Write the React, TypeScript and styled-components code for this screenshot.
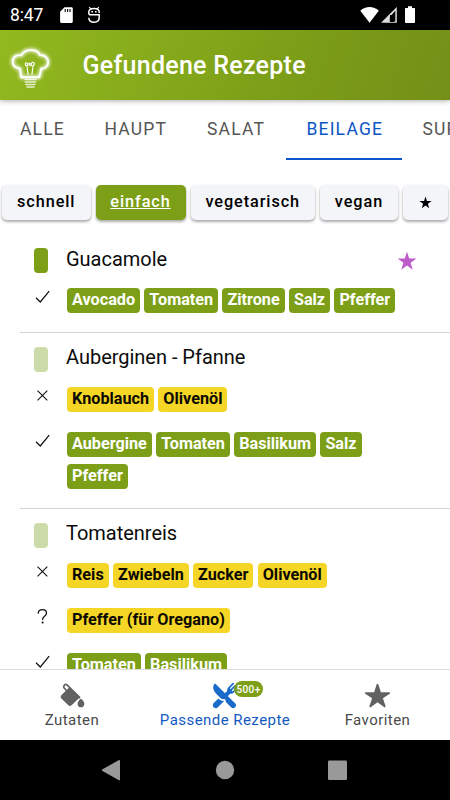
import React from 'react';
import styled, { createGlobalStyle } from 'styled-components';
import { IoColorFill, IoRestaurant, IoStar } from 'react-icons/io5';

const GlobalStyle = createGlobalStyle`
  *, *::before, *::after { box-sizing: border-box; }
  body { margin: 0; background: #fff; font-family: Roboto, "Liberation Sans", sans-serif; }
`;

const Screen = styled.div`
  display: flex;
  flex-direction: column;
  width: 450px;
  height: 800px;
  overflow: hidden;
  background: #fff;
  color: #0b0b0b;
`;

const StatusBar = styled.div`
  flex: none;
  display: flex;
  align-items: center;
  justify-content: space-between;
  height: 30px;
  padding: 0 34px 0 10px;
  background: #000;
  color: #fff;
`;

const Clock = styled.span`
  width: 50px;
  font-size: 17.5px;
  line-height: 30px;
  padding-bottom: 1px;
  letter-spacing: -0.1px;
`;

const StatusGroup = styled.div`
  display: flex;
  align-items: center;
  gap: 15px;
  height: 30px;
  svg { display: block; }
  ${Clock} { margin-right: -15px; }
`;

const Header = styled.header`
  flex: none;
  position: relative;
  display: flex;
  align-items: center;
  height: 70px;
  padding-left: 4px;
  background: linear-gradient(110deg, #92b91f 0%, #7d9f18 60%, #749018 100%);
  box-shadow: 0 1px 5px rgba(0, 0, 0, 0.32);
`;

const Title = styled.h1`
  margin: 0 0 0 22.5px;
  padding-top: 2px;
  color: #fff;
  font-size: 25px;
  line-height: 30px;
  font-weight: 500;
  letter-spacing: 0.27px;
`;

const Tabs = styled.nav`
  flex: none;
  display: flex;
  height: 60px;
  overflow: hidden;
`;

const Tab = styled.div<{ $width: number; $active?: boolean }>`
  flex: none;
  width: ${p => p.$width}px;
  height: 60px;
  padding-left: 20px;
  border-bottom: 2.5px solid ${p => (p.$active ? '#0b55cc' : 'transparent')};
  color: ${p => (p.$active ? '#0b55c4' : '#555')};
  font-size: 17.5px;
  line-height: 59px;
  letter-spacing: 1.2px;
  white-space: nowrap;
`;

const Filters = styled.div`
  flex: none;
  display: flex;
  gap: 5px;
  padding: 25px 2px 14.5px;
`;

const Filter = styled.button<{ $width: number; $active?: boolean }>`
  flex: none;
  width: ${p => p.$width}px;
  height: 34.5px;
  padding: 0 0 1px;
  border: 0;
  border-radius: 5px;
  background: ${p => (p.$active ? '#7d9f18' : '#f4f5f8')};
  box-shadow: 0 2px 3px rgba(0, 0, 0, 0.28), 0 1px 3px rgba(0, 0, 0, 0.1);
  color: ${p => (p.$active ? '#fff' : '#000')};
  font-family: inherit;
  font-size: 16.25px;
  font-weight: 500;
  letter-spacing: 0.92px;
  text-decoration: ${p => (p.$active ? 'underline' : 'none')};
  white-space: nowrap;
  svg { display: block; margin: 2px auto 0; }
`;

const List = styled.main`
  flex: 1;
  min-height: 0;
  overflow: hidden;
`;

const Recipe = styled.article`
  margin-left: 20px;
  padding: 14px 33px 18.5px 14px;
  border-bottom: 1.25px solid #d4d4d4;
`;

const RecipeHead = styled.div`
  display: flex;
  align-items: center;
  height: 25px;
  margin-bottom: 15px;
`;

const Swatch = styled.span<{ $faded?: boolean }>`
  width: 14px;
  height: 25px;
  border-radius: 4px;
  background: ${p => (p.$faded ? '#cddaa9' : '#7d9f18')};
`;

const RecipeName = styled.h2`
  flex: 1;
  margin: 0 0 0 18px;
  font-size: 20px;
  font-weight: 400;
  line-height: 22px;
  padding-bottom: 4px;
  letter-spacing: -0.02px;
`;

const StarSlot = styled.span`
  display: flex;
  height: 20px;
`;

const Group = styled.div`
  display: grid;
  grid-template-columns: 33px 1fr;
  & + & { margin-top: 20px; }
`;

const Mark = styled.span`
  svg { display: block; }
`;

const Chips = styled.div`
  display: flex;
  flex-wrap: wrap;
  gap: 7.5px 4.3px;
`;

const Chip = styled.span<{ $missing?: boolean }>`
  height: 25px;
  padding: 0 5px;
  border-radius: 4px;
  background: ${p => (p.$missing ? '#f5d626' : '#7d9f18')};
  color: ${p => (p.$missing ? '#0b0900' : '#fff')};
  font-size: 16.2px;
  font-weight: 700;
  line-height: 23.5px;
  white-space: nowrap;
`;

const BottomTabs = styled.nav`
  flex: none;
  display: grid;
  grid-template-columns: 144px 162px 143px;
  height: 71px;
  border-top: 1px solid #dedede;
  background: #fff;
`;

const BottomTab = styled.div<{ $active?: boolean }>`
  display: flex;
  flex-direction: column;
  align-items: center;
  padding-top: 12px;
  color: ${p => (p.$active ? '#1a6ac9' : '#616161')};
`;

const IconWrap = styled.span`
  position: relative;
  height: 27px;
  svg { display: block; }
`;

const Label = styled.span<{ $active?: boolean }>`
  color: ${p => (p.$active ? '#1459c2' : '#4a4a4a')};
  font-size: 15px;
  line-height: 22px;
  letter-spacing: 0.45px;
  white-space: nowrap;
`;

const Count = styled.span`
  position: absolute;
  left: 22.5px;
  top: -1px;
  width: 29px;
  height: 16px;
  border-radius: 8px;
  background: #7d9f18;
  color: #fff;
  font-size: 10px;
  font-weight: 500;
  line-height: 17px;
  letter-spacing: 0.4px;
  text-align: center;
`;

const SystemNav = styled.div`
  flex: none;
  height: 60px;
  background: #000;
  svg { display: block; }
`;

const SdCard = () => (
  <svg width="13" height="30" viewBox="0 0 13 30">
    <path d="M4.5 7.3h6.9c.9 0 1.4.6 1.4 1.4v12.7c0 .9-.6 1.5-1.4 1.5H1.5c-.8 0-1.4-.6-1.4-1.5V11.8z" fill="#fff" />
    <path d="M5.2 9v3M7.6 9v3M10 9v3" stroke="#000" strokeWidth="1.1" />
  </svg>
);

const DroidFace = () => (
  <svg width="14" height="30" viewBox="1 0 14 30" fill="none" stroke="#fff" strokeWidth="1.5">
    <path d="M2.200 7.200l1.600 1.600M11.800 7.200l-1.600 1.600" strokeWidth="1.200" />
    <path d="M12.200 13V12c0-2.400-2-3.600-5.200-3.600S1.800 9.600 1.800 12v1c0 1.200.6 1.800 1.800 1.800H12.200V17.500c0 3.200-2 4.700-5.200 4.700S1.800 20.700 1.800 17.700" />
    <path d="M4.400 11.700h1.600M8 11.700h1.600" />
  </svg>
);

const Signals = () => (
  <svg width="56" height="30" viewBox="0 0 56 30">
    <path d="M.3 10.700C5.500 5.700 13.600 5.700 18.800 10.700L9.600 22.700z" fill="#fff" />
    <path d="M21 22.800L36.800 7v15.800z" fill="#ddd" />
    <path d="M29.800 17v4.500h5.500V10.800z" fill="#000" />
    <path d="M30 15h4v7h-4z" fill="#000" />
    <path d="M48 6.300h4v1.600h2c.6 0 1 .4 1 1v13c0 .6-.4 1-1 1h-8c-.6 0-1-.4-1-1v-13c0-.6.4-1 1-1h2z" fill="#fff" />
  </svg>
);

const hatOutline =
  'M21.800 77.300L20.500 68.600C15.500 67.800 13 64.800 13.200 61.200C13.500 56.500 17.500 54.600 22 55.300C23.500 51.800 27.500 50.100 31.500 50.100C35.600 50.100 39 51.800 40.500 55C45.200 54.800 48.600 58 48.700 62C48.800 66 45.500 68.600 41.800 68.800L39.800 77.300Z';

const ChefBulb = () => (
  <svg width="56" height="60" viewBox="4.500 35 56 60" fill="none" stroke="#fff" strokeLinecap="round" strokeLinejoin="round">
    <defs>
      <filter id="glow" x="-40%" y="-40%" width="180%" height="180%">
        <feGaussianBlur stdDeviation="1.700" />
      </filter>
    </defs>
    <path d={hatOutline} strokeWidth="4.500" opacity=".7" filter="url(#glow)" />
    <path d={hatOutline} strokeWidth="1.900" />
    <path d="M28.500 74.500L27.500 66M32.500 74.500L33.500 66M27.500 66q-2-.4-1.700-2.200t1.900-.7t-.2 2.900M33.500 66q-1.600 0-1.800-1.500t-1.600-1.300t0 2q1.500.6 2-1.600t2.200-.9t-.8 3.300" strokeWidth="1.100" />
    <path d="M25.500 79.600h11M25.700 82h10.500M26.300 84.600h9.200M27.500 87h7" strokeWidth="1.500" opacity=".8" />
  </svg>
);

const CheckIcon = () => (
  <svg width="16" height="25" viewBox="0 0 16 25" fill="none" stroke="#111" strokeWidth="1.250">
    <path d="M2 9.700L6.300 14L15.200 3.200" />
  </svg>
);

const CrossIcon = () => (
  <svg width="16" height="25" viewBox="0 0 16 25" fill="none" stroke="#111" strokeWidth="1.100">
    <path d="M3.500 3.600L13.300 13.400M13.300 3.600L3.500 13.400" />
  </svg>
);

const QuestionIcon = () => (
  <svg width="16" height="25" viewBox="0 0 16 25">
    <path d="M4.200 5.600C4.300 3.100 6 1.700 8.300 1.700c2.400 0 4.200 1.300 4.200 3.500 0 3-3.900 3.200-3.900 6v.7" fill="none" stroke="#111" strokeWidth="1.300" />
    <circle cx="8.600" cy="14.600" r="1" />
  </svg>
);

const StarShape = ({ size, color }: { size: number; color: string }) => (
  <svg width={size} height={size} viewBox="0 0 20 20">
    <path d="M10 .8L12.200 7.500H19.400L13.600 11.800L15.800 18.800L10 14.500L4.200 18.800L6.400 11.800L.6 7.500H7.800Z" fill={color} />
  </svg>
);

const marks = { have: <CheckIcon />, missing: <CrossIcon />, swap: <QuestionIcon /> };

type GroupData = { kind: keyof typeof marks; items: string[] };
type RecipeData = { name: string; faded?: boolean; favorite?: boolean; groups: GroupData[] };

const recipes: RecipeData[] = [
  {
    name: 'Guacamole',
    favorite: true,
    groups: [{ kind: 'have', items: ['Avocado', 'Tomaten', 'Zitrone', 'Salz', 'Pfeffer'] }],
  },
  {
    name: 'Auberginen - Pfanne',
    faded: true,
    groups: [
      { kind: 'missing', items: ['Knoblauch', 'Olivenöl'] },
      { kind: 'have', items: ['Aubergine', 'Tomaten', 'Basilikum', 'Salz', 'Pfeffer'] },
    ],
  },
  {
    name: 'Tomatenreis',
    faded: true,
    groups: [
      { kind: 'missing', items: ['Reis', 'Zwiebeln', 'Zucker', 'Olivenöl'] },
      { kind: 'swap', items: ['Pfeffer (für Oregano)'] },
      { kind: 'have', items: ['Tomaten', 'Basilikum'] },
    ],
  },
];

export default function App() {
  return (
    <Screen>
      <GlobalStyle />
      <StatusBar>
        <StatusGroup>
          <Clock>8:47</Clock>
          <SdCard />
          <DroidFace />
        </StatusGroup>
        <StatusGroup><Signals /></StatusGroup>
      </StatusBar>
      <Header>
        <ChefBulb />
        <Title>Gefundene Rezepte</Title>
      </Header>
      <Tabs>
        <Tab $width={84.5}>ALLE</Tab>
        <Tab $width={102.5}>HAUPT</Tab>
        <Tab $width={99.4}>SALAT</Tab>
        <Tab $width={116} $active>BEILAGE</Tab>
        <Tab $width={110}>SUPPE</Tab>
      </Tabs>
      <Filters>
        <Filter $width={88.5}>schnell</Filter>
        <Filter $width={90} $active>einfach</Filter>
        <Filter $width={124.5}>vegetarisch</Filter>
        <Filter $width={78}>vegan</Filter>
        <Filter $width={44.5}><StarShape size={13} color="#000" /></Filter>
      </Filters>
      <List>
        {recipes.map(recipe => (
          <Recipe key={recipe.name}>
            <RecipeHead>
              <Swatch $faded={recipe.faded} />
              <RecipeName>{recipe.name}</RecipeName>
              {recipe.favorite && <StarSlot><StarShape size={20} color="#bd5bcb" /></StarSlot>}
            </RecipeHead>
            {recipe.groups.map(group => (
              <Group key={group.kind}>
                <Mark>{marks[group.kind]}</Mark>
                <Chips>
                  {group.items.map(item => (
                    <Chip key={item} $missing={group.kind !== 'have'}>{item}</Chip>
                  ))}
                </Chips>
              </Group>
            ))}
          </Recipe>
        ))}
      </List>
      <BottomTabs>
        <BottomTab>
          <IconWrap><IoColorFill size={27} /></IconWrap>
          <Label>Zutaten</Label>
        </BottomTab>
        <BottomTab $active>
          <IconWrap>
            <IoRestaurant size={27} />
            <Count>500+</Count>
          </IconWrap>
          <Label $active>Passende Rezepte</Label>
        </BottomTab>
        <BottomTab>
          <IconWrap><IoStar size={27} /></IconWrap>
          <Label>Favoriten</Label>
        </BottomTab>
      </BottomTabs>
      <SystemNav>
        <svg width="450" height="60" viewBox="0 0 450 60" fill="#999">
          <path d="M102.500 29.300L118.500 20.300Q120 19.600 120 21V39.500Q120 40.900 118.500 40L102.500 31Q101.500 30.200 102.500 29.300Z" />
          <circle cx="225" cy="30" r="9.200" />
          <rect x="328" y="20.500" width="19" height="19.500" rx="1.300" />
        </svg>
      </SystemNav>
    </Screen>
  );
}
